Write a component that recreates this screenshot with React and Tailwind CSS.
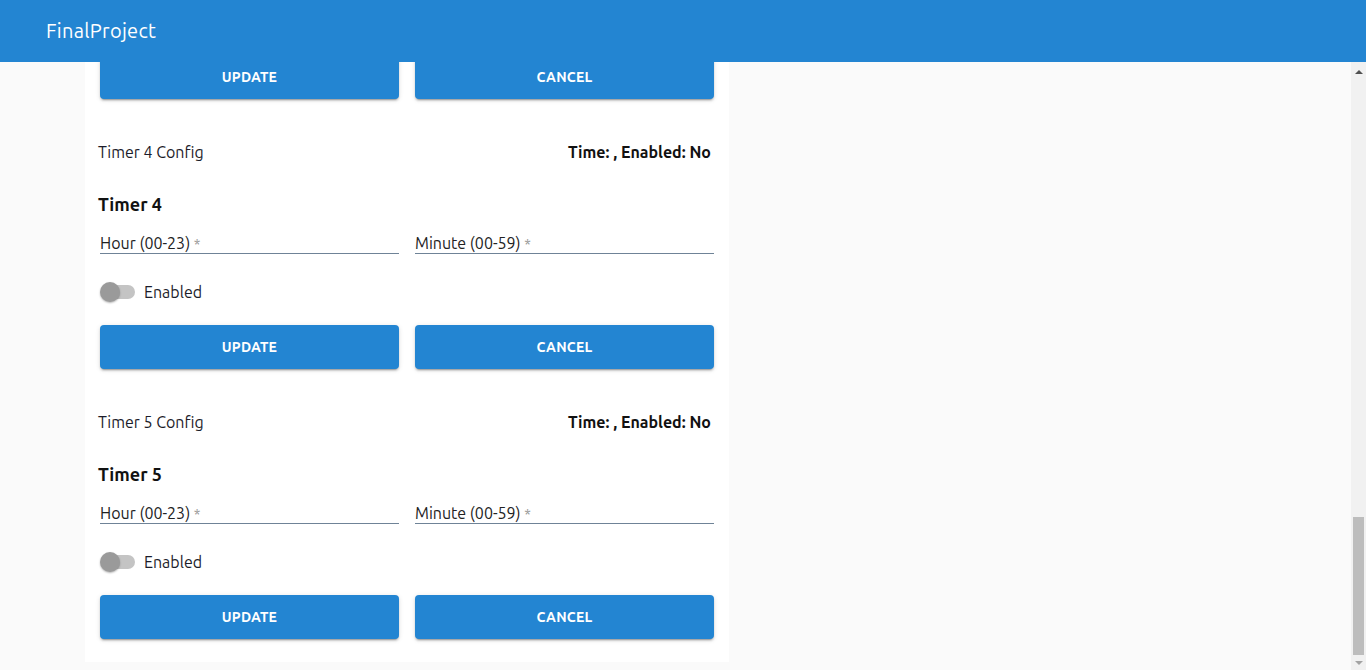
import React from "react";

const font = { fontFamily: "Ubuntu, Roboto, 'Noto Sans', sans-serif" };

function Buttons() {
  return (
    <div className="flex gap-[16px]">
      <button className="h-[44px] flex-1 rounded-[4px] bg-[#2385d2] text-white text-[14px] font-semibold uppercase tracking-[0.2px] shadow-[0_3px_1px_-2px_rgba(0,0,0,0.2),0_2px_2px_0_rgba(0,0,0,0.14),0_1px_5px_0_rgba(0,0,0,0.12)]">
        Update
      </button>
      <button className="h-[44px] flex-1 rounded-[4px] bg-[#2385d2] text-white text-[14px] font-semibold uppercase tracking-[0.2px] shadow-[0_3px_1px_-2px_rgba(0,0,0,0.2),0_2px_2px_0_rgba(0,0,0,0.14),0_1px_5px_0_rgba(0,0,0,0.12)]">
        Cancel
      </button>
    </div>
  );
}

function Field({ label }) {
  return (
    <div className="flex-1 h-[21px] border-b border-[#6f8397] text-[16px] leading-[20px] text-[#222] pl-[0px]">
      {label} <span className="text-[#999] text-[14px]">*</span>
    </div>
  );
}

function Section({ n }) {
  return (
    <div className="pt-[41px]">
      <div className="flex justify-between items-center h-[24px] -ml-[2px] mr-[3px] text-[16px] text-[#1c1c2a]">
        <span>Timer {n} Config</span>
        <span className="font-bold text-[#111]">Time: , Enabled: No</span>
      </div>
      <div className="mt-[28px] h-[24px] -ml-[2px] text-[18px] font-bold leading-[24px] text-[#111]">
        Timer {n}
      </div>
      <div className="mt-[17px] flex gap-[16px]">
        <Field label="Hour (00-23)" />
        <Field label="Minute (00-59)" />
      </div>
      <div className="mt-[26px] h-[24px] flex items-center">
        <div className="relative w-[35px] h-[20px] flex items-center">
          <div className="absolute left-[3px] right-0 h-[14px] rounded-full bg-[#c4c4c4]" />
          <div className="absolute left-0 w-[20px] h-[20px] rounded-full bg-[#9a9a9a] shadow-[0_1px_2px_rgba(0,0,0,0.3)]" />
        </div>
        <span className="ml-[9px] text-[16px] text-[#1c1c2a]">Enabled</span>
      </div>
      <div className="mt-[21px]">
        <Buttons />
      </div>
    </div>
  );
}

export default function App() {
  return (
    <div style={font} className="w-[1366px] h-[670px] flex flex-col overflow-hidden bg-[#fafafa]">
      <header className="h-[62px] shrink-0 bg-[#2385d2] text-white text-[20px] tracking-[0.3px] pl-[46px] flex items-center relative z-10">
        FinalProject
      </header>
      <div className="flex-1 flex overflow-hidden">
        <main className="flex-1 overflow-hidden">
          <div className="-mt-[7px] ml-[85px] w-[644px] bg-white px-[15px] pb-[23px]">
            <Buttons />
            <Section n={4} />
            <Section n={5} />
          </div>
        </main>
        <div className="w-[15px] shrink-0 bg-[#f1f1f1] flex flex-col items-center">
          <div className="h-[17px] flex items-center justify-center">
            <div className="w-0 h-0 border-l-[4px] border-r-[4px] border-b-[4px] border-l-transparent border-r-transparent border-b-[#505050] mt-[2px]" />
          </div>
          <div className="flex-1" />
          <div className="w-[11px] h-[138px] bg-[#bdbdbd]" />
          <div className="h-[15px] flex items-center justify-center">
            <div className="w-0 h-0 border-l-[4px] border-r-[4px] border-t-[4px] border-l-transparent border-r-transparent border-t-[#a3a3a3]" />
          </div>
        </div>
      </div>
    </div>
  );
}
